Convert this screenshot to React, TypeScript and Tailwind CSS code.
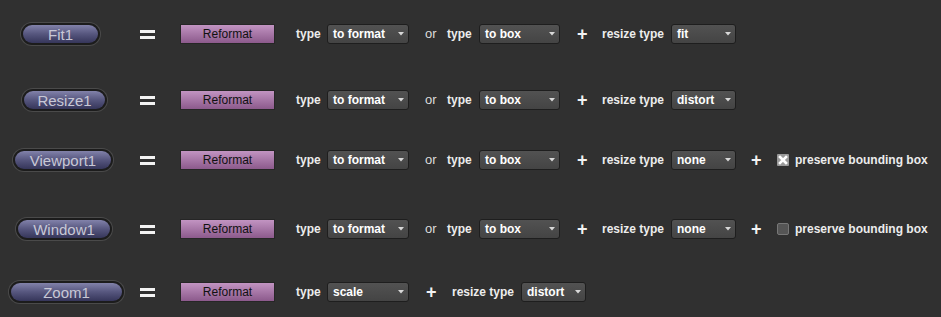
import React from "react";

const font = { fontFamily: '"Liberation Sans", Arial, sans-serif' };

function Pill({ label, w, ml }: { label: string; w: string; ml: string }) {
  return (
    <div className="w-[126px] flex items-center">
      <div className={`${ml} ${w} h-[22px] rounded-full bg-[#1c1c1c] p-[2px] shadow-[0_0_0_1px_#4a4a4a]`}>
        <div className="w-full h-full rounded-full bg-gradient-to-b from-[#8282aa] via-[#56567e] to-[#36365a] flex items-center justify-center text-[15px] leading-none text-[#c8c8d6]">
          {label}
        </div>
      </div>
    </div>
  );
}

function Equals() {
  return (
    <div className="ml-[14px] w-[15px] flex flex-col gap-[3px]">
      <div className="h-[3px] bg-[#f2f2f2]" />
      <div className="h-[3px] bg-[#f2f2f2]" />
    </div>
  );
}

function Reformat() {
  return (
    <div className="ml-[25px] w-[95px] h-[20px] border border-[#262626] bg-gradient-to-b from-[#c294c2] to-[#8c5a8c] flex items-center justify-center text-[12px] text-[#111]">
      Reformat
    </div>
  );
}

function Label({ text, w, ml }: { text: string; w: string; ml?: string }) {
  return <div className={`${w} ${ml ?? ""} text-[12px] font-bold text-[#ececec] whitespace-nowrap`}>{text}</div>;
}

function Dropdown({ value, w }: { value: string; w: string }) {
  return (
    <div className={`${w} h-[20px] rounded-[3px] border border-[#1e1e1e] bg-gradient-to-b from-[#525252] to-[#444] flex items-center justify-between pl-[5px] pr-[4px] text-[12px] font-bold text-white`}>
      <span>{value}</span>
      <svg width="6" height="4" viewBox="0 0 6 4">
        <path d="M0 0 L6 0 L3 3.5 Z" fill="#d8d8d8" />
      </svg>
    </div>
  );
}

function Plus({ ml, w }: { ml: string; w: string }) {
  return (
    <div className={`${ml} ${w} text-[18px] font-bold leading-none text-[#f2f2f2]`}>+</div>
  );
}

function Check({ checked }: { checked: boolean }) {
  return checked ? (
    <svg width="12" height="12" viewBox="0 0 12 12" className="block">
      <rect x="0" y="0" width="12" height="12" rx="1" fill="#9a9a9a" />
      <path d="M3 3 L9 9 M9 3 L3 9" stroke="#fff" strokeWidth="2.6" strokeLinecap="square" />
    </svg>
  ) : (
    <div className="w-[12px] h-[12px] rounded-[2px] bg-[#555] border border-[#777]" />
  );
}

function FullRow({
  node,
  pw,
  pml,
  resize,
  cb,
  mt,
}: {
  node: string;
  pw: string;
  pml: string;
  resize: string;
  cb?: "on" | "off";
  mt: string;
}) {
  return (
    <div className={`${mt} h-[20px] flex items-center`}>
      <Pill label={node} w={pw} ml={pml} />
      <Equals />
      <Reformat />
      <Label text="type" w="w-[31px]" ml="ml-[21px]" />
      <Dropdown value="to format" w="w-[82px]" />
      <div className="ml-[16px] w-[22px] text-[13px] text-[#dcdcdc]">or</div>
      <Label text="type" w="w-[32px]" />
      <Dropdown value="to box" w="w-[81px]" />
      <Plus ml="ml-[17px]" w="w-[25px]" />
      <Label text="resize type" w="w-[69px]" />
      <Dropdown value={resize} w="w-[65px]" />
      {cb && (
        <>
          <Plus ml="ml-[15px]" w="w-[26px]" />
          <Check checked={cb === "on"} />
          <Label text="preserve bounding box" w="w-auto" ml="ml-[6px]" />
        </>
      )}
    </div>
  );
}

export default function App() {
  return (
    <div className="w-[941px] h-[317px] bg-[#303030] pt-[24px] flex flex-col" style={font}>
      <FullRow node="Fit1" pw="w-[79px]" pml="ml-[21px]" resize="fit" mt="" />
      <FullRow node="Resize1" pw="w-[85px]" pml="ml-[22px]" resize="distort" mt="mt-[46px]" />
      <FullRow node="Viewport1" pw="w-[100px]" pml="ml-[13px]" resize="none" cb="on" mt="mt-[40px]" />
      <FullRow node="Window1" pw="w-[96px]" pml="ml-[16px]" resize="none" cb="off" mt="mt-[49px]" />
      <div className="mt-[43px] h-[20px] flex items-center">
        <Pill label="Zoom1" w="w-[115px]" ml="ml-[9px]" />
        <Equals />
        <Reformat />
        <Label text="type" w="w-[31px]" ml="ml-[21px]" />
        <Dropdown value="scale" w="w-[82px]" />
        <Plus ml="ml-[17px]" w="w-[26px]" />
        <Label text="resize type" w="w-[69px]" />
        <Dropdown value="distort" w="w-[65px]" />
      </div>
    </div>
  );
}
